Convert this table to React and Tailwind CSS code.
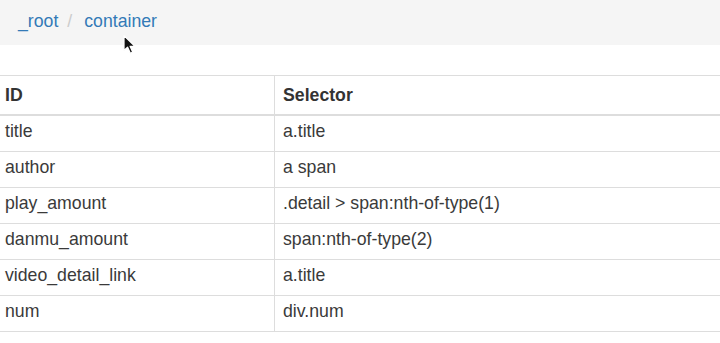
import React from "react";

const rows = [
  ["title", "a.title"],
  ["author", "a span"],
  ["play_amount", ".detail > span:nth-of-type(1)"],
  ["danmu_amount", "span:nth-of-type(2)"],
  ["video_detail_link", "a.title"],
  ["num", "div.num"],
];

export default function App() {
  return (
    <div
      className="relative w-[720px] h-[343px] bg-white overflow-hidden text-[#333]"
      style={{ fontFamily: '"Liberation Sans", Arial, sans-serif' }}
    >
      <div className="h-[45px] bg-[#f5f5f5] flex items-center pl-[18px] pb-[2px] text-[17.7px]">
        <span className="text-[#337ab7]">_root</span>
        <span className="text-[#ccc] px-[9px]">/</span>
        <span className="text-[#337ab7] pl-[3px]">container</span>
      </div>
      <div className="mt-[30px] border-t border-[#ddd] text-[17.7px]">
        <div className="grid grid-cols-[274px_1fr] border-b-2 border-[#ddd]">
          <div className="h-[38px] flex items-center pl-[5px] pt-[1px] font-bold">ID</div>
          <div className="h-[38px] flex items-center pl-[8px] pt-[1px] font-bold border-l border-[#ddd]">Selector</div>
        </div>
        {rows.map(([id, sel]) => (
          <div key={id} className="grid grid-cols-[274px_1fr] border-b border-[#ddd]">
            <div className="h-[35px] flex items-center pl-[5px] pb-[4px] text-[#3a3a3a]">{id}</div>
            <div className="h-[35px] flex items-center pl-[8px] pb-[4px] text-[#3a3a3a] border-l border-[#ddd]">{sel}</div>
          </div>
        ))}
      </div>
      <svg
        className="absolute left-[122px] top-[34px]"
        width="16"
        height="22"
        viewBox="0 0 14 20"
      >
        <path
          d="M1.5 1.5 L1.5 15 L4.8 12 L7.3 17.5 L9.5 16.5 L7.1 11.2 L11.5 11.2 Z"
          fill="#111"
          stroke="#fff"
          strokeWidth="1.2"
          strokeLinejoin="round"
        />
      </svg>
    </div>
  );
}
